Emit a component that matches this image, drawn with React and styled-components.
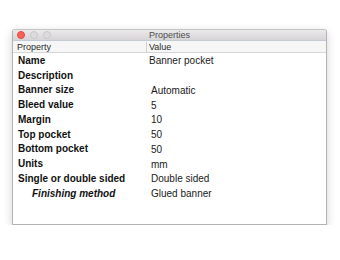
import React from 'react';
import styled, { createGlobalStyle } from 'styled-components';

const rows = [
  { name: 'Name', value: 'Banner pocket', edit: true },
  { name: 'Description', value: '' },
  { name: 'Banner size', value: 'Automatic' },
  { name: 'Bleed value', value: '5' },
  { name: 'Margin', value: '10' },
  { name: 'Top pocket', value: '50' },
  { name: 'Bottom pocket', value: '50' },
  { name: 'Units', value: 'mm' },
  { name: 'Single or double sided', value: 'Double sided' },
  { name: 'Finishing method', value: 'Glued banner', child: true },
];

const App = () => {
  return (
    <>
      <GlobalStyle />
      <Window>
        <TitleBar>
          <Lights>
            <Light $color="#fc605b" $border="#de4a45" />
            <Light $color="#dcdcdc" $border="#c8c8c8" />
            <Light $color="#dcdcdc" $border="#c8c8c8" />
          </Lights>
          <Title>Properties</Title>
        </TitleBar>
        <Header>
          <HeadCell>Property</HeadCell>
          <HeadCell $divider>Value</HeadCell>
        </Header>
        <Body>
          {rows.map((row) => (
            <Row key={row.name}>
              <NameCell $child={row.child}>{row.name}</NameCell>
              <ValueCell $edit={row.edit}>{row.value}</ValueCell>
            </Row>
          ))}
        </Body>
      </Window>
    </>
  );
};

export default App;

const GlobalStyle = createGlobalStyle`
  body {
    margin: 0;
    background: #ffffff;
    font-family: 'Liberation Sans', Arial, sans-serif;
  }
`;

const Window = styled.div`
  margin: 29px 0 0 12px;
  width: 315px;
  height: 196px;
  box-sizing: border-box;
  border: 1px solid #b4b4b4;
  border-top-color: #c4c4c4;
  border-radius: 3px 3px 0 0;
  background: #ffffff;
  box-shadow: 0 3px 10px rgba(0, 0, 0, 0.18);
  display: flex;
  flex-direction: column;
  overflow: hidden;
`;

const TitleBar = styled.div`
  position: relative;
  height: 10px;
  background: linear-gradient(#ebe9eb, #d6d4d6);
  border-bottom: 1px solid #c2cbd6;
  display: flex;
  align-items: center;
  justify-content: center;
`;

const Lights = styled.div`
  position: absolute;
  left: 4px;
  top: 1px;
  display: flex;
  gap: 5px;
`;

const Light = styled.span`
  width: 8px;
  height: 8px;
  box-sizing: border-box;
  border-radius: 50%;
  background: ${({ $color }) => $color};
  border: 1px solid ${({ $border }) => $border};
`;

const Title = styled.div`
  font-size: 9px;
  color: #4d4d4d;
  line-height: 10px;
`;

const Header = styled.div`
  height: 11px;
  background: #f6f6f6;
  border-bottom: 1px solid #d6d6d6;
  display: grid;
  grid-template-columns: 133px 1fr;
  align-items: center;
`;

const HeadCell = styled.div`
  font-size: 9px;
  color: #2a2a2a;
  line-height: 10px;
  padding-left: ${({ $divider }) => ($divider ? '2px' : '4px')};
  border-left: ${({ $divider }) => ($divider ? '1px solid #cfcfcf' : 'none')};
`;

const Body = styled.div`
  display: flex;
  flex-direction: column;
`;

const Row = styled.div`
  height: 14.75px;
  display: grid;
  grid-template-columns: 134px 1fr;
  align-items: center;
`;

const NameCell = styled.div`
  font-size: 10px;
  font-weight: 700;
  font-style: ${({ $child }) => ($child ? 'italic' : 'normal')};
  color: #111111;
  padding-left: ${({ $child }) => ($child ? '19px' : '5px')};
  white-space: nowrap;
`;

const ValueCell = styled.div`
  font-size: 10px;
  color: #1a1a1a;
  padding-left: ${({ $edit }) => ($edit ? '2px' : '4px')};
  padding-top: ${({ $edit }) => ($edit ? '0' : '1px')};
  white-space: nowrap;
`;
